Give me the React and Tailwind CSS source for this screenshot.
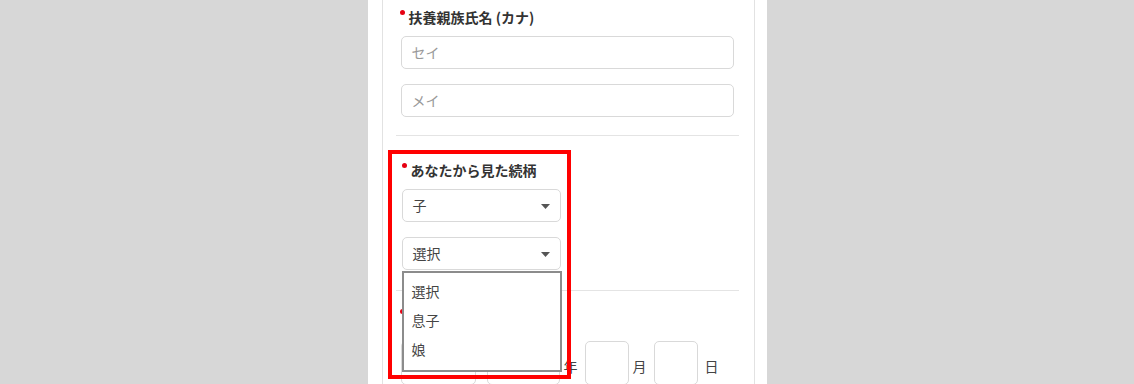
import React from "react";

const RELATION_OPTIONS = ["選択", "息子", "娘"];

const Dot = () => (
  <span className="absolute left-0 top-[3px] w-[5px] h-[5px] rounded-full bg-[#e60012]" />
);

const Label = ({ children }) => (
  <div className="relative h-5 pl-[9px] text-[14px] leading-5 font-bold text-[#333]">
    <Dot />
    {children}
  </div>
);

const Arrow = () => (
  <svg width="9" height="5" viewBox="0 0 9 5" className="absolute right-[10px] top-[14px]">
    <path d="M0 0 H9 L4.5 5 Z" fill="#555" />
  </svg>
);

const TextInput = ({ placeholder }) => (
  <div className="h-[33px] rounded-[5px] border border-[#d9d9d9] px-[10px] flex items-center text-[14px] text-[#999]">
    {placeholder}
  </div>
);

const Select = ({ value, children }) => (
  <div className="relative w-[159px] h-[33px] rounded-[5px] border border-[#d9d9d9] pl-[10px] flex items-center text-[14px] text-[#444]">
    {value}
    <Arrow />
    {children}
  </div>
);

const App = () => {
  return (
    <div
      className="w-full h-[384px] bg-[#d7d7d7] flex justify-center overflow-hidden"
      style={{ fontFamily: '"Noto Sans CJK JP", "Noto Sans", sans-serif' }}
    >
      <div className="w-[399px] bg-white pl-[14px] pr-[12px]">
        <div className="h-full border-x border-[#e2e2e2] pl-[13px] pr-[15px]">
          {/* 扶養親族氏名 */}
          <div className="pt-[7px] pb-[18px] px-[5px] border-b border-[#e4e4e4]">
            <div className="-ml-[1px]">
              <Label>扶養親族氏名 (カナ)</Label>
            </div>
            <div className="mt-[9px] flex flex-col gap-[15px]">
              <TextInput placeholder="セイ" />
              <TextInput placeholder="メイ" />
            </div>
          </div>

          {/* 続柄 */}
          <div className="relative pt-[24px] pb-[20px] px-[6px] border-b border-[#e4e4e4]">
            <div className="absolute left-[-8px] top-[14px] w-[183px] h-[229px] border-4 border-[#f00] z-20" />
            <Label>あなたから見た続柄</Label>
            <div className="mt-[9px] flex flex-col gap-[15px]">
              <Select value="子" />
              <Select value="選択">
                <div className="absolute left-[-1px] top-[33px] w-[160px] h-[101px] bg-white border-2 border-[#8c8c8c] z-10 pt-[8px] pl-[8px] flex flex-col gap-[9px] text-[14px] leading-[20px] text-[#444]">
                  {RELATION_OPTIONS.map((o) => (
                    <div key={o}>{o}</div>
                  ))}
                </div>
              </Select>
            </div>
          </div>

          {/* 生年月日 (label hidden under the open list) */}
          <div className="pt-[15px] px-[4px]">
            <div className="relative h-5">
              <Dot />
            </div>
            <div className="mt-[15px] ml-[1px] flex items-end text-[14px] text-[#444]">
              <div className="w-[75px] h-[44px] rounded-[5px] border border-[#d9d9d9]" />
              <div className="ml-[11px] w-[73px] h-[44px] rounded-[5px] border border-[#d9d9d9]" />
              <span className="ml-[4px] mb-[8px]">年</span>
              <div className="ml-[7px] w-[44px] h-[44px] rounded-[5px] border border-[#d9d9d9]" />
              <span className="ml-[4px] mb-[8px]">月</span>
              <div className="ml-[7px] w-[44px] h-[44px] rounded-[5px] border border-[#d9d9d9]" />
              <span className="ml-[7px] mb-[8px]">日</span>
            </div>
          </div>
        </div>
      </div>
    </div>
  );
};

export default App;
